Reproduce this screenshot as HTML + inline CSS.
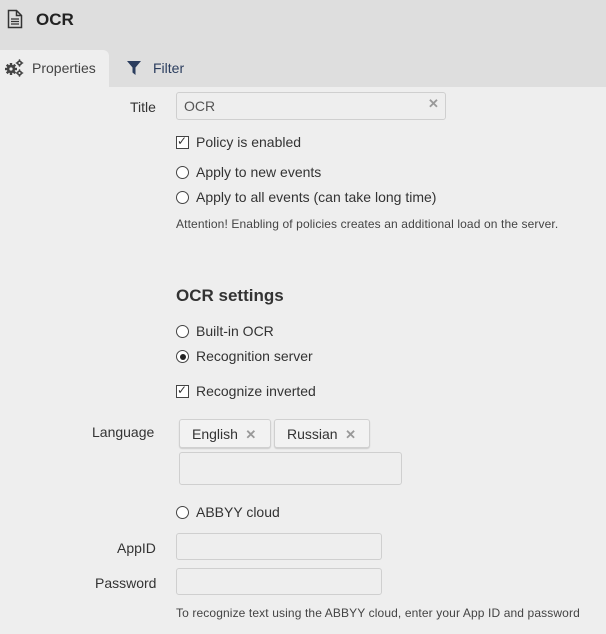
<!DOCTYPE html>
<html><head><meta charset="utf-8"><style>
*{margin:0;padding:0;box-sizing:border-box}
body{width:606px;height:634px;background:#eeeeee;font-family:"Liberation Sans",Arial,sans-serif;color:#333;position:relative;overflow:hidden;font-size:14px}
.a{position:absolute;white-space:nowrap}
.hdr{position:absolute;left:0;top:0;width:606px;height:87px;background:#dedede}
.tab{position:absolute;left:0;top:50px;width:109px;height:37px;background:#eeeeee;border-radius:0 6px 0 0}
.inp{position:absolute;background:#eeeeee;border:1px solid #cfcfcf;border-radius:3px}
.cb{position:absolute;width:13px;height:13px;border:1px solid #444;background:#fff}
.rb{position:absolute;width:13px;height:13px;border:1px solid #444;border-radius:50%;background:#fff}
.lbl{font-size:14px;color:#333}
.tag{position:absolute;height:29px;border:1px solid #d0d0d0;border-radius:3px;background:#f2f2f2;box-shadow:0 1px 1px #ccc;font-size:14px;padding:6px 0 0 12px}
.x{color:#999;font-weight:bold;font-size:13px}
.sm{font-size:12px;color:#444;letter-spacing:0.12px}
</style></head><body>
<div class="hdr"></div>
<div class="tab"></div>
<svg class="a" style="left:7px;top:9px" width="16" height="20" viewBox="0 0 16 20"><path d="M1.5 1.5h8l5 5v12h-13z M9.5 1.5v5h5" fill="none" stroke="#333" stroke-width="1.5"/><path d="M4 10h8M4 12.5h8M4 15h8" stroke="#333" stroke-width="1.2"/></svg>
<div class="a" style="left:36px;top:10px;font-size:17px;font-weight:bold;color:#222">OCR</div>
<svg class="a" style="left:4px;top:59px" width="20" height="18" viewBox="0 0 20 18">
<g fill="#444"><circle cx="7" cy="10" r="4.2"/><rect x="5.8" y="4" width="2.4" height="12"/><rect x="1" y="8.8" width="12" height="2.4"/><rect x="5.8" y="4" width="2.4" height="12" transform="rotate(45 7 10)"/><rect x="5.8" y="4" width="2.4" height="12" transform="rotate(-45 7 10)"/></g>
<circle cx="7" cy="10" r="1.6" fill="#eee"/>
<g fill="#444"><circle cx="15.5" cy="4" r="2.6"/><rect x="14.8" y="0.3" width="1.4" height="7.4"/><rect x="11.8" y="3.3" width="7.4" height="1.4"/><circle cx="15.5" cy="14" r="2.6"/><rect x="14.8" y="10.3" width="1.4" height="7.4"/><rect x="11.8" y="13.3" width="7.4" height="1.4"/></g>
<circle cx="15.5" cy="4" r="1" fill="#eee"/><circle cx="15.5" cy="14" r="1" fill="#eee"/></svg>
<div class="a" style="left:32px;top:60px;font-size:14px;color:#444">Properties</div>
<svg class="a" style="left:127px;top:61px" width="14" height="14" viewBox="0 0 14 14"><path d="M0 0h14L8.5 6.5V14L5.5 11.5V6.5z" fill="#2b3d5e"/></svg>
<div class="a" style="left:153px;top:60px;font-size:14px;color:#2b3d5e">Filter</div>

<div class="a lbl" style="left:130px;top:99px">Title</div>
<div class="inp" style="left:176px;top:92px;width:270px;height:28px"></div>
<div class="a" style="left:184px;top:98px;font-size:14px;color:#555">OCR</div>
<div class="a x" style="left:428px;top:96px">✕</div>

<div class="cb" style="left:176px;top:136px"></div><div class="a" style="left:177px;top:134px;font-size:12px;color:#333">✓</div>
<div class="a lbl" style="left:196px;top:134px">Policy is enabled</div>
<div class="rb" style="left:176px;top:166px"></div>
<div class="a lbl" style="left:196px;top:164px">Apply to new events</div>
<div class="rb" style="left:176px;top:191px"></div>
<div class="a lbl" style="left:196px;top:189px">Apply to all events (can take long time)</div>
<div class="a sm" style="left:176px;top:217px">Attention! Enabling of policies creates an additional load on the server.</div>

<div class="a" style="left:176px;top:286px;font-size:17px;font-weight:bold;color:#333">OCR settings</div>
<div class="rb" style="left:176px;top:325px"></div>
<div class="a lbl" style="left:196px;top:323px">Built-in OCR</div>
<div class="rb" style="left:176px;top:350px"></div><div class="a" style="left:179.5px;top:353.5px;width:6px;height:6px;border-radius:50%;background:#222"></div>
<div class="a lbl" style="left:196px;top:348px">Recognition server</div>
<div class="cb" style="left:176px;top:385px"></div><div class="a" style="left:177px;top:383px;font-size:12px;color:#333">✓</div>
<div class="a lbl" style="left:196px;top:383px">Recognize inverted</div>

<div class="a lbl" style="left:92px;top:424px">Language</div>
<div class="tag" style="left:179px;top:419px;width:92px">English <span class="x">&nbsp;✕</span></div>
<div class="tag" style="left:274px;top:419px;width:96px">Russian <span class="x">&nbsp;✕</span></div>
<div class="inp" style="left:179px;top:452px;width:223px;height:33px"></div>

<div class="rb" style="left:176px;top:506px"></div>
<div class="a lbl" style="left:196px;top:504px">ABBYY cloud</div>
<div class="a lbl" style="left:117px;top:540px">AppID</div>
<div class="inp" style="left:176px;top:533px;width:206px;height:27px"></div>
<div class="a lbl" style="left:95px;top:575px">Password</div>
<div class="inp" style="left:176px;top:568px;width:206px;height:27px"></div>
<div class="a sm" style="left:176px;top:606px">To recognize text using the ABBYY cloud, enter your App ID and password</div>
</body></html>
